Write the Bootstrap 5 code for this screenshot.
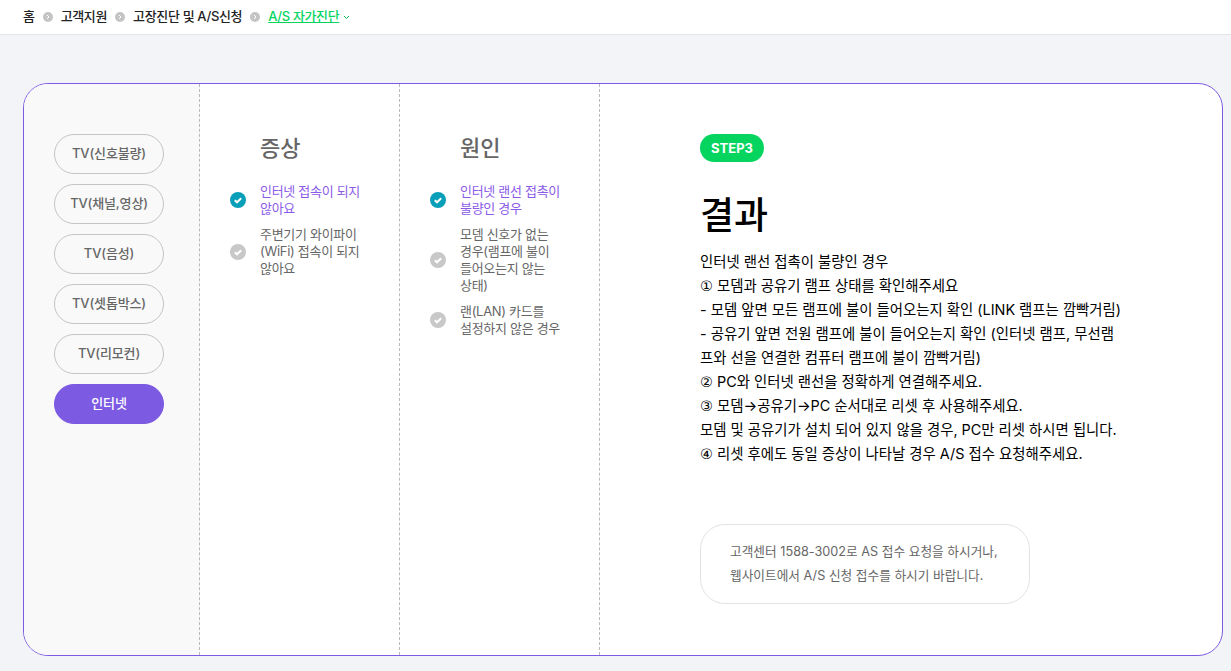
<!DOCTYPE html>
<html lang="ko">
<head>
    <meta charset="UTF-8">
    <meta name="viewport" content="width=device-width, initial-scale=1">
    <title>A/S 자가진단</title>
    <link href="https://cdn.jsdelivr.net/npm/bootstrap@5.3.0/dist/css/bootstrap.min.css" rel="stylesheet">
    <style>
        html, body {
            height: 100%;
            overflow: hidden;
        }
        body {
            background-color: #f3f4f8;
            font-family: "Inter", "Noto Sans CJK KR", sans-serif;
            color: #000;
        }
        .crumb-bar {
            height: 35px;
            padding-left: 23px;
            background-color: #fff;
            border-bottom: 1px solid #e4e4e6;
            font-size: 13px;
            font-weight: 500;
            letter-spacing: -.35px;
            color: #222;
            gap: 8px;
        }
        .crumb-current {
            color: #05d55f;
            text-decoration: underline;
        }
        .crumb-dot {
            width: 10px;
            height: 10px;
            flex: none;
        }
        .crumb-caret {
            margin-left: -4px;
            width: 7px;
            height: 5px;
        }
        .diag-box {
            margin: 48px 8px 0 23px;
            height: 573px;
            background-color: #fff;
            border: 1px solid #7c5ae2;
            border-radius: 25px;
            overflow: hidden;
        }
        .diag-side {
            width: 176px;
            flex: none;
            padding: 50px 0 0 30px;
            background-color: #f9f9f9;
            border-right: 1px dashed #b9b9b9;
            gap: 10px;
        }
        .side-btn {
            width: 110px;
            height: 40px;
            padding: 0;
            font-size: 13px;
            font-weight: 500;
            letter-spacing: -.15px;
            color: #666;
            background-color: transparent;
            border: 1px solid #c4c4c4;
            border-radius: 20px;
        }
        .side-btn-on {
            color: #fff;
            background-color: #7c5ae2;
            border-color: #7c5ae2;
        }
        .diag-col {
            width: 200px;
            flex: none;
            padding: 46px 30px 0 30px;
            border-right: 1px dashed #b9b9b9;
        }
        .col-title {
            margin: 0 0 17px 30px;
            font-size: 22px;
            line-height: 36px;
            font-weight: 500;
            color: #666;
        }
        .pick-list {
            gap: 9px;
            font-size: 13px;
            line-height: 17px;
            letter-spacing: -.3px;
            color: #666;
            word-break: keep-all;
        }
        .pick-on {
            color: #8b5be8;
        }
        .pick-icon {
            width: 16px;
            height: 16px;
            flex: none;
            margin-right: 14px;
        }
        .diag-result {
            padding: 50px 0 0 100px;
        }
        .step-pill {
            width: 64px;
            height: 28px;
            padding-top: 1px;
            font-size: 13px;
            font-weight: 700;
            color: #fff;
            background-color: #05d55f;
            border-radius: 14px;
        }
        .result-title {
            margin: 27px 0 7px;
            font-size: 37px;
            line-height: 54px;
            font-weight: 500;
        }
        .result-text {
            width: 440px;
            font-size: 14.4px;
            line-height: 24px;
        }
        .circ-num {
            font-family: "DejaVu Sans", sans-serif;
        }
        .note-box {
            width: 330px;
            height: 80px;
            margin-top: 58px;
            padding: 15px 0 0 29px;
            border: 1px solid #e2e2e2;
            border-radius: 25px;
            font-size: 12.7px;
            line-height: 24px;
            color: #666;
        }
    </style>
</head>
<body>
    <!-- 상단 경로 -->
    <nav class="crumb-bar d-flex align-items-center">
        <span>홈</span>
        <svg class="crumb-dot" viewBox="0 0 10 10"><circle cx="5" cy="5" r="5" fill="#c4c4c4"/><path d="M4 3l2 2-2 2" fill="none" stroke="#fff" stroke-width="1"/></svg>
        <span>고객지원</span>
        <svg class="crumb-dot" viewBox="0 0 10 10"><circle cx="5" cy="5" r="5" fill="#c4c4c4"/><path d="M4 3l2 2-2 2" fill="none" stroke="#fff" stroke-width="1"/></svg>
        <span>고장진단 및 A/S신청</span>
        <svg class="crumb-dot" viewBox="0 0 10 10"><circle cx="5" cy="5" r="5" fill="#c4c4c4"/><path d="M4 3l2 2-2 2" fill="none" stroke="#fff" stroke-width="1"/></svg>
        <span class="crumb-current">A/S 자가진단</span>
        <svg class="crumb-caret" viewBox="0 0 7 5"><path d="M1 1l2.5 2.5L6 1" fill="none" stroke="#05b855" stroke-width="1"/></svg>
    </nav>

    <main class="diag-box d-flex">
        <div class="diag-side d-flex flex-column">
            <button type="button" class="btn side-btn">TV(신호불량)</button>
            <button type="button" class="btn side-btn">TV(채널,영상)</button>
            <button type="button" class="btn side-btn">TV(음성)</button>
            <button type="button" class="btn side-btn">TV(셋톱박스)</button>
            <button type="button" class="btn side-btn">TV(리모컨)</button>
            <button type="button" class="btn side-btn side-btn-on">인터넷</button>
        </div>

        <section class="diag-col">
            <h2 class="col-title">증상</h2>
            <div class="pick-list d-flex flex-column">
                <div class="d-flex align-items-center pick-on">
                    <svg class="pick-icon" viewBox="0 0 16 16"><circle cx="8" cy="8" r="8" fill="#0a9fb8"/><path d="M4.8 8.2l2.2 2.1 4.2-4" fill="none" stroke="#fff" stroke-width="2"/></svg>
                    <span>인터넷 접속이 되지 않아요</span>
                </div>
                <div class="d-flex align-items-center">
                    <svg class="pick-icon" viewBox="0 0 16 16"><circle cx="8" cy="8" r="8" fill="#c8c8c8"/><path d="M4.8 8.2l2.2 2.1 4.2-4" fill="none" stroke="#fff" stroke-width="2"/></svg>
                    <span>주변기기 와이파이 (WiFi) 접속이 되지 않아요</span>
                </div>
            </div>
        </section>

        <section class="diag-col">
            <h2 class="col-title">원인</h2>
            <div class="pick-list d-flex flex-column">
                <div class="d-flex align-items-center pick-on">
                    <svg class="pick-icon" viewBox="0 0 16 16"><circle cx="8" cy="8" r="8" fill="#0a9fb8"/><path d="M4.8 8.2l2.2 2.1 4.2-4" fill="none" stroke="#fff" stroke-width="2"/></svg>
                    <span>인터넷 랜선 접촉이 불량인 경우</span>
                </div>
                <div class="d-flex align-items-center">
                    <svg class="pick-icon" viewBox="0 0 16 16"><circle cx="8" cy="8" r="8" fill="#c8c8c8"/><path d="M4.8 8.2l2.2 2.1 4.2-4" fill="none" stroke="#fff" stroke-width="2"/></svg>
                    <span>모뎀 신호가 없는 경우(램프에 불이 들어오는지 않는 상태)</span>
                </div>
                <div class="d-flex align-items-center">
                    <svg class="pick-icon" viewBox="0 0 16 16"><circle cx="8" cy="8" r="8" fill="#c8c8c8"/><path d="M4.8 8.2l2.2 2.1 4.2-4" fill="none" stroke="#fff" stroke-width="2"/></svg>
                    <span>랜(LAN) 카드를 설정하지 않은 경우</span>
                </div>
            </div>
        </section>

        <section class="diag-result flex-grow-1">
            <div class="step-pill d-flex align-items-center justify-content-center">STEP3</div>
            <h1 class="result-title">결과</h1>
            <div class="result-text">
                인터넷 랜선 접촉이 불량인 경우<br>
                <span class="circ-num">①</span> 모뎀과 공유기 램프 상태를 확인해주세요<br>
                - 모뎀 앞면 모든 램프에 불이 들어오는지 확인 (LINK 램프는 깜빡거림)<br>
                - 공유기 앞면 전원 램프에 불이 들어오는지 확인 (인터넷 램프, 무선램<br>프와 선을 연결한 컴퓨터 램프에 불이 깜빡거림)<br>
                <span class="circ-num">②</span> PC와 인터넷 랜선을 정확하게 연결해주세요.<br>
                <span class="circ-num">③</span> 모뎀→공유기→PC 순서대로 리셋 후 사용해주세요.<br>
                모뎀 및 공유기가 설치 되어 있지 않을 경우, PC만 리셋 하시면 됩니다.<br>
                <span class="circ-num">④</span> 리셋 후에도 동일 증상이 나타날 경우 A/S 접수 요청해주세요.
            </div>
            <div class="note-box">
                고객센터 1588-3002로 AS 접수 요청을 하시거나,<br>
                웹사이트에서 A/S 신청 접수를 하시기 바랍니다.
            </div>
        </section>
    </main>

    <script src="https://cdn.jsdelivr.net/npm/bootstrap@5.3.0/dist/js/bootstrap.bundle.min.js"></script>
</body>
</html>
